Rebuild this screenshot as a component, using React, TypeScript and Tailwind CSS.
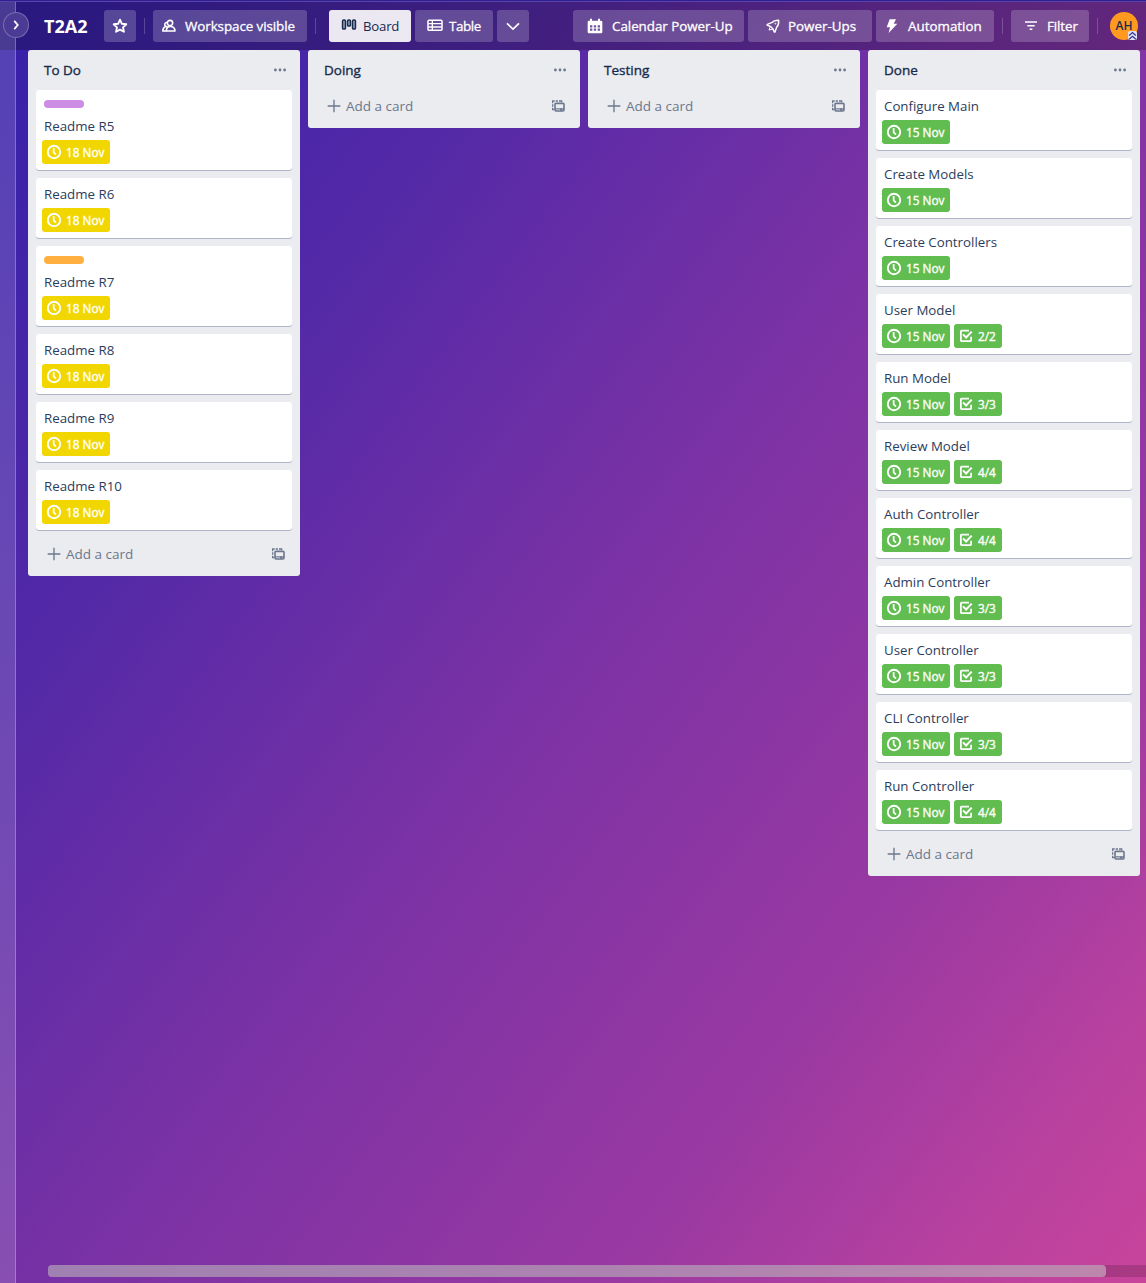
import type { ReactNode } from "react";

type Card = { title: string; date: string; label?: "purple" | "orange"; checks?: string };
type ListData = { title: string; done?: boolean; cards: Card[] };

const lists: ListData[] = [
  {
    title: "To Do",
    cards: [
      { title: "Readme R5", date: "18 Nov", label: "purple" },
      { title: "Readme R6", date: "18 Nov" },
      { title: "Readme R7", date: "18 Nov", label: "orange" },
      { title: "Readme R8", date: "18 Nov" },
      { title: "Readme R9", date: "18 Nov" },
      { title: "Readme R10", date: "18 Nov" },
    ],
  },
  { title: "Doing", cards: [] },
  { title: "Testing", cards: [] },
  {
    title: "Done",
    done: true,
    cards: [
      { title: "Configure Main", date: "15 Nov" },
      { title: "Create Models", date: "15 Nov" },
      { title: "Create Controllers", date: "15 Nov" },
      { title: "User Model", date: "15 Nov", checks: "2/2" },
      { title: "Run Model", date: "15 Nov", checks: "3/3" },
      { title: "Review Model", date: "15 Nov", checks: "4/4" },
      { title: "Auth Controller", date: "15 Nov", checks: "4/4" },
      { title: "Admin Controller", date: "15 Nov", checks: "3/3" },
      { title: "User Controller", date: "15 Nov", checks: "3/3" },
      { title: "CLI Controller", date: "15 Nov", checks: "3/3" },
      { title: "Run Controller", date: "15 Nov", checks: "4/4" },
    ],
  },
];

function Icon({ size = 16, className = "", children }: { size?: number; className?: string; children: ReactNode }) {
  return (
    <svg width={size} height={size} viewBox="0 0 24 24" fill="none" stroke="currentColor" strokeWidth="2" className={`shrink-0 ${className}`}>
      {children}
    </svg>
  );
}

const StarIcon = () => (
  <Icon>
    <path d="m12 2.500 2.800 6.200 6.700.7-5 4.600 1.400 6.700-5.900-3.300-5.900 3.300 1.400-6.700-5-4.600 6.700-.7Z" strokeWidth="2.800" strokeLinejoin="round" />
  </Icon>
);

const PeopleIcon = () => (
  <Icon>
    <circle cx="13.500" cy="7.500" r="4" strokeWidth="2.400" />
    <path d="M8 19.500c0-4 2-7 6-7s7 3 7 7Z" strokeWidth="2.400" strokeLinejoin="round" />
    <path d="M9 6.800a3 3 0 0 0-2 5.500c.6.500 1.500.9 2.500.9M6.500 13C4 14 2.800 16 2.800 19.500H8" strokeWidth="2.400" />
  </Icon>
);

const BoardIcon = () => (
  <Icon>
    <rect x="2.500" y="3" width="4" height="13.500" rx="1.500" strokeWidth="2.600" />
    <rect x="10" y="3" width="4" height="9" rx="1.500" strokeWidth="2.600" />
    <rect x="17.500" y="3" width="4" height="13.500" rx="1.500" strokeWidth="2.600" />
  </Icon>
);

const TableIcon = () => (
  <Icon>
    <rect x="1.500" y="3.500" width="21" height="15" rx="1.500" strokeWidth="2.300" />
    <path d="M2 8.500h20M2 13.500h20M8 3.500v15" />
  </Icon>
);

const CalendarIcon = () => (
  <Icon>
    <path d="M3 4h18a2 2 0 0 1 2 2v15a2 2 0 0 1-2 2H3a2 2 0 0 1-2-2V6a2 2 0 0 1 2-2Z" fill="currentColor" stroke="none" />
    <path d="M6 1v5M18 1v5" strokeWidth="3" />
    <path d="M4.500 12.500h3.500M10.200 12.500h3.500M16 12.500h3.500M4.500 17.500h3.500M10.200 17.500h3.500M16 17.500h3.500" stroke="#73559f" strokeWidth="3.200" />
  </Icon>
);

const RocketIcon = () => (
  <Icon>
    <path d="M20.500 3.500c-4.500-.2-8 .8-10.500 3.500L3.500 9.500c-.6.3-.5 1 0 1.300L8 12.500l4 4 1.800 4.200c.3.600 1 .600 1.300 0L17.500 14c2.500-2.500 3.300-6 3-10.500Z" strokeLinejoin="round" strokeWidth="2.200" />
    <path d="M8 12.500 6 18l6-1.500" strokeWidth="1.500" />
    <circle cx="15.500" cy="8.500" r=".8" strokeWidth="1.200" />
  </Icon>
);

const BoltIcon = () => (
  <Icon>
    <path d="M8.500 2h9.500l-3.500 6.500H20L7 22.500l2-8.500H4Z" fill="currentColor" stroke="none" />
  </Icon>
);

const FilterIcon = () => (
  <Icon>
    <path d="M3 6h18M6.500 11.500h11M10 17h4" strokeWidth="2.200" />
  </Icon>
);

const ClockIcon = () => (
  <Icon>
    <circle cx="12" cy="12" r="9.300" strokeWidth="2.900" />
    <path d="M11.500 6v6.500l3.500 3.300" strokeWidth="2.700" />
  </Icon>
);

const CheckIcon = () => (
  <Icon>
    <path d="M16.500 4H5.500A1.200 1.200 0 0 0 4.300 5.200v13.300A1.200 1.200 0 0 0 5.500 19.700h13a1.200 1.200 0 0 0 1.200-1.200V13" strokeWidth="2.700" />
    <path d="m7.500 9.500 4.700 4.700L20.500 5.500" strokeWidth="3" />
  </Icon>
);

const TemplateIcon = () => (
  <Icon>
    <rect x="7.500" y="8" width="13.500" height="11.500" rx="1.500" strokeWidth="2.400" />
    <path d="M7 16.300h14" strokeWidth="1.800" />
    <path d="M15 17.500h3.500" strokeWidth="3" />
    <path d="M6 17.500H4v-3M4 13V9.500M4 8V4.500h3M8.500 4.500H12M13.500 4.500h4v2" strokeWidth="1.900" />
  </Icon>
);

const glass = "flex h-8 shrink-0 items-center rounded-[3px] bg-white/20 text-white";
const label = "whitespace-nowrap text-[13.400px] leading-5 [-webkit-text-stroke:0.3px]";

function Divider({ className }: { className: string }) {
  return <div className={`h-4 w-px shrink-0 bg-white/20 ${className}`} />;
}

function Header() {
  return (
    <header className="flex h-[50px] shrink-0 items-center bg-black/[.24] pl-7 pt-[2px]">
      <h1 className="box-content w-11 shrink-0 whitespace-nowrap pl-4 pr-4 text-[18px] font-bold leading-8 text-white">T2A2</h1>
      <button className={`${glass} w-8 justify-center`}><StarIcon /></button>
      <Divider className="mx-2" />
      <button className={`${glass} w-[154px] pl-2`}><PeopleIcon /><span className={`${label} ml-2 tracking-[-0.080px]`}>Workspace visible</span></button>
      <Divider className="ml-2 mr-[13px]" />
      <button className="flex h-8 w-[82px] shrink-0 items-center rounded-[3px] bg-white/90 pl-3 text-[#172b4d]"><BoardIcon /><span className="ml-[6px] text-[13.200px] leading-5 tracking-[-0.200px]">Board</span></button>
      <button className={`${glass} ml-1 w-[78px] pl-3`}><TableIcon /><span className={`${label} ml-[6px] tracking-[-0.400px]`}>Table</span></button>
      <button className={`${glass} ml-1 w-8 justify-center`}><Icon><path d="m3 8 9 8.500L21 8" strokeWidth="2.500" /></Icon></button>
      <div className="w-11 shrink-0" />
      <button className={`${glass} w-[171px] pl-[14px]`}><CalendarIcon /><span className={`${label} ml-[9px] tracking-[-0.040px]`}>Calendar Power-Up</span></button>
      <button className={`${glass} ml-1 w-[124px] pl-[17px]`}><RocketIcon /><span className={`${label} ml-[7px]`}>Power-Ups</span></button>
      <button className={`${glass} ml-1 w-[118px] pl-2`}><BoltIcon /><span className={`${label} ml-2`}>Automation</span></button>
      <Divider className="mx-2" />
      <button className={`${glass} w-[78px] pl-3`}><FilterIcon /><span className={`${label} ml-2 tracking-[-0.100px]`}>Filter</span></button>
      <Divider className="ml-2 mr-3" />
      <div className="relative flex size-7 shrink-0 items-center justify-center rounded-full bg-[#ff991f] text-[12px] font-semibold text-[#172b4d]">
        AH
        <span className="absolute bottom-0 right-[1px] flex size-[9px] items-center justify-center rounded-[2px] bg-[#dfe1f0] text-[#30309a]">
          <Icon size={9}><path d="m3 12 9-8 9 8M3 22l9-8 9 8" strokeWidth="3" /></Icon>
        </span>
      </div>
    </header>
  );
}

function Badge({ done, children, className }: { done?: boolean; children: ReactNode; className: string }) {
  return <div className={`flex h-6 items-center rounded-[3px] text-[11.800px] leading-4 text-white [-webkit-text-stroke:0.35px] ${done ? "bg-[#61bd4f]" : "bg-[#f2d600]"} ${className}`}>{children}</div>;
}

function CardView({ card, done }: { card: Card; done?: boolean }) {
  return (
    <div className={`rounded-[3px] bg-white px-[6px] shadow-[0_1px_0_#b0b6c8] ${card.label ? "h-20 pt-[10px]" : "h-[60px] pt-[6px]"}`}>
      {card.label && <div className={`mb-2 ml-[2px] h-2 w-10 rounded-full ${card.label === "purple" ? "bg-[#cd8de5]" : "bg-[#ffaf3f]"}`} />}
      <p className="ml-[2px] h-5 whitespace-nowrap text-[13.300px] leading-5 text-[#2b3d5c]">{card.title}</p>
      <div className="mt-1 flex gap-1">
        <Badge done={done} className="w-[68px] pl-1"><ClockIcon /><span className="ml-1 whitespace-nowrap">{card.date}</span></Badge>
        {card.checks && <Badge done={done} className="w-12 pl-1"><CheckIcon /><span className="ml-1">{card.checks}</span></Badge>}
      </div>
    </div>
  );
}

function List({ list }: { list: ListData }) {
  return (
    <section className="w-[272px] shrink-0 rounded-[3px] bg-[#ebecf0] px-2 pb-2">
      <div className="flex h-10 items-center justify-between pl-2 pr-[6px]">
        <h2 className="text-[13.500px] leading-5 text-[#172b4d] [-webkit-text-stroke:0.35px]">{list.title}</h2>
        <svg width="12" height="4" viewBox="0 0 12 4" fill="#6b778c"><circle cx="1.400" cy="2" r="1.400" /><circle cx="6" cy="2" r="1.400" /><circle cx="10.600" cy="2" r="1.400" /></svg>
      </div>
      <div className="flex flex-col gap-2">
        {list.cards.map((card) => <CardView key={card.title} card={card} done={list.done} />)}
      </div>
      <div className={`mb-[-2px] flex h-8 items-center pl-[10px] pr-[6px] text-[#6b778c] ${list.cards.length ? "mt-2" : ""}`}>
        <Icon><path d="M12 2.500v19M2.500 12h19" strokeWidth="2" /></Icon>
        <span className="ml-1 text-[13.500px] leading-5">Add a card</span>
        <span className="ml-auto"><TemplateIcon /></span>
      </div>
    </section>
  );
}

export default function App() {
  return (
    <div className="relative h-[1283px] w-[1146px] overflow-hidden bg-[linear-gradient(127deg,#3520a8_0%,#4525a8_14%,#5329a7_25%,#7b32a5_50%,#9a39a2_75%,#b8419f_90%,#c8449b_100%)] font-['Open_Sans','Noto_Sans',sans-serif]">
      <Header />
      <main className="flex items-start gap-2 pl-7">
        {lists.map((list) => <List key={list.title} list={list} />)}
      </main>
      <aside className="absolute left-0 top-0 h-full w-4 border-r border-white/25 bg-white/15" />
      <div className="absolute left-0 top-0 h-[2px] w-full border-b border-[#5a43ad] bg-[#30208f]" />
      <button className="absolute left-[3px] top-3 flex size-[26px] items-center justify-center rounded-full border border-white/25 bg-[#4c3b95] text-white">
        <Icon size={14}><path d="m9 5 6 7-6 7" strokeWidth="3" /></Icon>
      </button>
      <div className="absolute bottom-[6px] left-12 right-0 h-3 rounded-l-md bg-black/15">
        <div className="h-full w-[1058px] rounded-[4px] bg-[#d0c8d0]/55" />
      </div>
    </div>
  );
}
